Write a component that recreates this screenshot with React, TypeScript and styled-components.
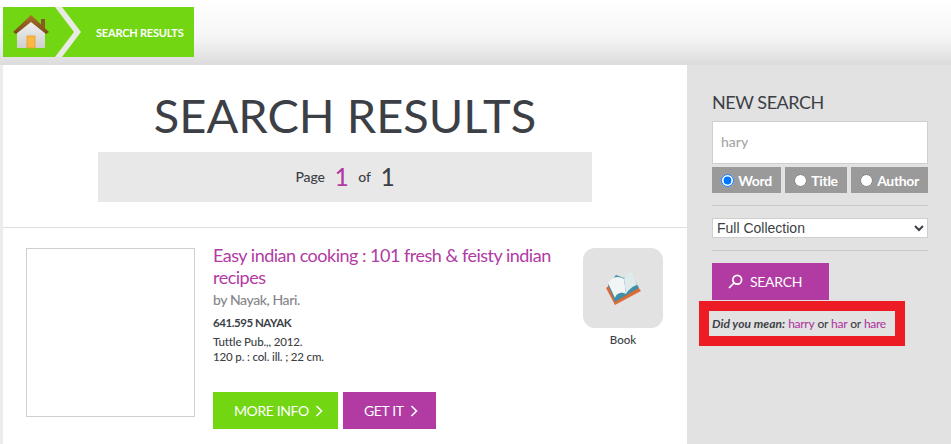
import React from 'react'
import styled, { createGlobalStyle } from 'styled-components'

const Global = createGlobalStyle`
  html, body { margin: 0; padding: 0; height: 444px; overflow: hidden; background: #e2e2e2; }
  body { font-family: "Lato", "Open Sans", sans-serif; color: #3d3f46; }
  * { box-sizing: border-box; }
`

const Page = styled.div`
  width: 951px;
  height: 444px;
  overflow: hidden;
  display: flex;
  flex-direction: column;
`

const TopBar = styled.header`
  height: 65px;
  padding: 7px 0 8px 3px;
  background: linear-gradient(#ffffff 0%, #f6f6f6 55%, #dcdcdc 100%);
`

const Crumbs = styled.nav`
  width: 191px;
  height: 50px;
  background: #73d613;
  display: flex;
  align-items: center;
`

const HomeLink = styled.a`
  width: 52px;
  height: 50px;
  display: flex;
  align-items: center;
  padding: 0 0 0 10px;
`

const Chevron = styled.svg`
  width: 30px;
  height: 50px;
  flex: none;
`

const CrumbText = styled.span`
  margin-left: 11px;
  font-size: 11px;
  font-weight: 700;
  color: #fff;
  white-space: nowrap;
  letter-spacing: -0.2px;
`

const Body = styled.div`
  flex: 1;
  display: flex;
  padding-left: 3px;
  background: #ececec;
  min-height: 0;
`

const Main = styled.main`
  width: 684px;
  background: #fff;
`

const Heading = styled.h1`
  margin: 21px 0 0;
  font-size: 47px;
  line-height: 58px;
  font-weight: 400;
  text-align: center;
  color: #3d3f46;
`

const PageBar = styled.div`
  width: 494px;
  height: 50px;
  margin: 8px 0 0 95px;
  padding-bottom: 2px;
  background: #e8e8e8;
  display: flex;
  align-items: center;
  justify-content: center;
  font-size: 14px;
  font-weight: 500;
  letter-spacing: -0.2px;
`

const PageNum = styled.span<{ $accent?: boolean }>`
  font-size: 24px;
  margin: 0 10px;
  color: ${p => (p.$accent ? '#b13ba3' : '#3d3f46')};
  &:last-child { margin-right: 0; }
`

const Result = styled.article`
  margin-top: 25px;
  padding: 16px 24px 0 23px;
  border-top: 1px solid #dedede;
  display: flex;
`

const Cover = styled.div`
  width: 169px;
  height: 169px;
  margin-top: 4px;
  flex: none;
  border: 1px solid #cfcfcf;
  background: #fff;
`

const Details = styled.div`
  width: 350px;
  margin-left: 18px;
  flex: none;
`

const Title = styled.a`
  display: block;
  font-size: 18px;
  line-height: 22px;
  letter-spacing: -0.5px;
  color: #b13ba3;
`

const Author = styled.div`
  margin-top: 3px;
  font-size: 14px;
  line-height: 18px;
  font-weight: 500;
  letter-spacing: -0.4px;
  color: #85858a;
`

const CallNo = styled.div`
  margin-top: 6px;
  font-size: 11.5px;
  line-height: 16px;
  font-weight: 700;
  letter-spacing: -0.45px;
`

const Pub = styled.div`
  margin-top: 3px;
  font-size: 11.5px;
  line-height: 15px;
  font-weight: 500;
  letter-spacing: -0.15px;
`

const Actions = styled.div`
  margin-top: 28px;
  display: flex;
  gap: 5px;
`

const ActionButton = styled.a<{ $w: number; $green?: boolean }>`
  width: ${p => p.$w}px;
  height: 37px;
  padding-left: 21px;
  display: flex;
  align-items: center;
  gap: 6px;
  font-size: 14px;
  letter-spacing: -0.4px;
  color: #fff;
  background: ${p => (p.$green ? '#73d613' : '#b13ba3')};
`

const Format = styled.div`
  width: 80px;
  margin: 4px 0 0 20px;
  flex: none;
  text-align: center;
  font-size: 11.5px;
  font-weight: 500;
`

const FormatTile = styled.div`
  width: 80px;
  height: 80px;
  margin-bottom: 5px;
  border-radius: 12px;
  background: #e2e2e2;
  display: flex;
  align-items: center;
  justify-content: center;
`

const Side = styled.aside`
  width: 264px;
  padding: 26px 23px 0 25px;
  background: #e2e2e2;
`

const SideHeading = styled.h2`
  margin: 0 0 8px;
  font-size: 18px;
  line-height: 22px;
  font-weight: 400;
  letter-spacing: -0.45px;
  color: #3d3f46;
`

const SearchInput = styled.input`
  display: block;
  width: 100%;
  height: 43px;
  padding: 0 8px 2px;
  border: 1px solid #cfcfcf;
  background: #fff;
  font: 500 14px "Lato", sans-serif;
  color: #a6a6a6;
  outline: none;
`

const RadioRow = styled.div`
  margin-top: 3px;
  display: flex;
  justify-content: space-between;
`

const RadioChip = styled.label<{ $w: number }>`
  width: ${p => p.$w}px;
  height: 26px;
  background: #9a9a9a;
  display: flex;
  align-items: center;
  justify-content: center;
  gap: 4px;
  color: #fff;
  font-size: 14px;
  font-weight: 700;
  letter-spacing: -0.35px;
  input { margin: 0; width: 13px; height: 13px; }
`

const Rule = styled.hr`
  margin: 12px 0;
  border: 0;
  border-top: 1px solid #c8c8c8;
`

const CollectionSelect = styled.select`
  display: block;
  width: 100%;
  height: 20px;
  border: 1px solid #cfcfcf;
  background-color: #fff;
  padding: 0;
  font: 14px "Liberation Sans", Arial, sans-serif;
  color: #3d3f46;
`

const SearchButton = styled.button`
  display: flex;
  align-items: center;
  gap: 7px;
  width: 117px;
  height: 37px;
  padding: 0 0 0 16px;
  border: 0;
  background: #b13ba3;
  color: #fff;
  font: 14px "Lato", sans-serif;
  letter-spacing: -0.3px;
`

const SuggestFrame = styled.div`
  width: 206px;
  margin: 1px 0 0 -13px;
  border: 10px solid #ed1c24;
`

const Suggest = styled.div`
  height: 25px;
  padding-left: 3px;
  display: flex;
  align-items: center;
  gap: 3px;
  font-size: 12px;
  font-weight: 500;
  letter-spacing: -0.3px;
  white-space: nowrap;
  em { font-weight: 700; letter-spacing: 0.05px; }
  a { color: #b13ba3; }
`

const Arrow = () => (
  <svg width="8" height="12" viewBox="0 0 8 12" fill="none" stroke="#fff" strokeWidth="1.6">
    <path d="M1.5 1 L6.5 6 L1.5 11" />
  </svg>
)

const HomeIcon = () => (
  <svg width="36" height="35" viewBox="0 0 36 35">
    <defs>
      <linearGradient id="roof" x1="0" y1="0" x2="0" y2="1">
        <stop offset="0" stopColor="#a8702a" />
        <stop offset="1" stopColor="#7a4c17" />
      </linearGradient>
      <linearGradient id="wall" x1="0" y1="0" x2="0" y2="1">
        <stop offset="0" stopColor="#f2f2f2" />
        <stop offset="1" stopColor="#cfcfcf" />
      </linearGradient>
    </defs>
    <rect x="28" y="4" width="4" height="9" fill="#8a5a22" />
    <path d="M4 17 L18 5 L32 17 V33 H4 Z" fill="url(#wall)" />
    <path d="M0 17 L18 0 L36 17 L33 19 L18 7 L3 19 Z" fill="url(#roof)" />
    <rect x="14" y="21" width="8" height="12" fill="#fbb845" stroke="#e89c22" strokeWidth="0.8" />
  </svg>
)

const BookIcon = () => (
  <svg width="37" height="35" viewBox="0 0 37 35">
    <path d="M1 17 L10 34 L21 28 L36 20 L29 11 L13 8 Z" fill="#de6a35" />
    <path d="M3 14 L10 31 L20 25 L34 17 L26 2 L19 7 L11 4 Z" fill="#3f8fa6" />
    <path d="M3 12 C8 5 14 5 19 8 L21 23 C16 20 11 23 10 27 Z" fill="#f1f5f5" />
    <path d="M19 8 C21 3 25 1 27 1 L32 14 C28 15 23 19 21 23 Z" fill="#dfeaec" />
  </svg>
)

const SearchGlass = () => (
  <svg width="15" height="15" viewBox="0 0 15 15" fill="none" stroke="#fff" strokeWidth="1.7">
    <circle cx="9.2" cy="5.8" r="4.4" />
    <path d="M6 9 L1 14" />
  </svg>
)

export default function App() {
  return (
    <Page>
      <Global />
      <TopBar>
        <Crumbs>
          <HomeLink><HomeIcon /></HomeLink>
          <Chevron viewBox="0 0 30 50">
            <polygon points="0,0 7,0 26,25 7,50 0,50 19,25" fill="#e9eae6" />
          </Chevron>
          <CrumbText>SEARCH RESULTS</CrumbText>
        </Crumbs>
      </TopBar>
      <Body>
        <Main>
          <Heading>SEARCH RESULTS</Heading>
          <PageBar>
            Page <PageNum $accent>1</PageNum> of <PageNum>1</PageNum>
          </PageBar>
          <Result>
            <Cover />
            <Details>
              <Title>Easy indian cooking : 101 fresh &amp; feisty indian recipes</Title>
              <Author>by Nayak, Hari.</Author>
              <CallNo>641.595 NAYAK</CallNo>
              <Pub>Tuttle Pub.,, 2012.<br />120 p. : col. ill. ; 22 cm.</Pub>
              <Actions>
                <ActionButton $w={125} $green>MORE INFO <Arrow /></ActionButton>
                <ActionButton $w={93}>GET IT <Arrow /></ActionButton>
              </Actions>
            </Details>
            <Format>
              <FormatTile><BookIcon /></FormatTile>
              Book
            </Format>
          </Result>
        </Main>
        <Side>
          <SideHeading>NEW SEARCH</SideHeading>
          <SearchInput defaultValue="hary" />
          <RadioRow>
            <RadioChip $w={69}><input type="radio" name="by" defaultChecked /> Word</RadioChip>
            <RadioChip $w={62}><input type="radio" name="by" /> Title</RadioChip>
            <RadioChip $w={77}><input type="radio" name="by" /> Author</RadioChip>
          </RadioRow>
          <Rule />
          <CollectionSelect defaultValue="full">
            <option value="full">Full Collection</option>
          </CollectionSelect>
          <Rule />
          <SearchButton><SearchGlass /> SEARCH</SearchButton>
          <SuggestFrame>
            <Suggest>
              <em>Did you mean:</em> <a>harry</a> or <a>har</a> or <a>hare</a>
            </Suggest>
          </SuggestFrame>
        </Side>
      </Body>
    </Page>
  )
}
